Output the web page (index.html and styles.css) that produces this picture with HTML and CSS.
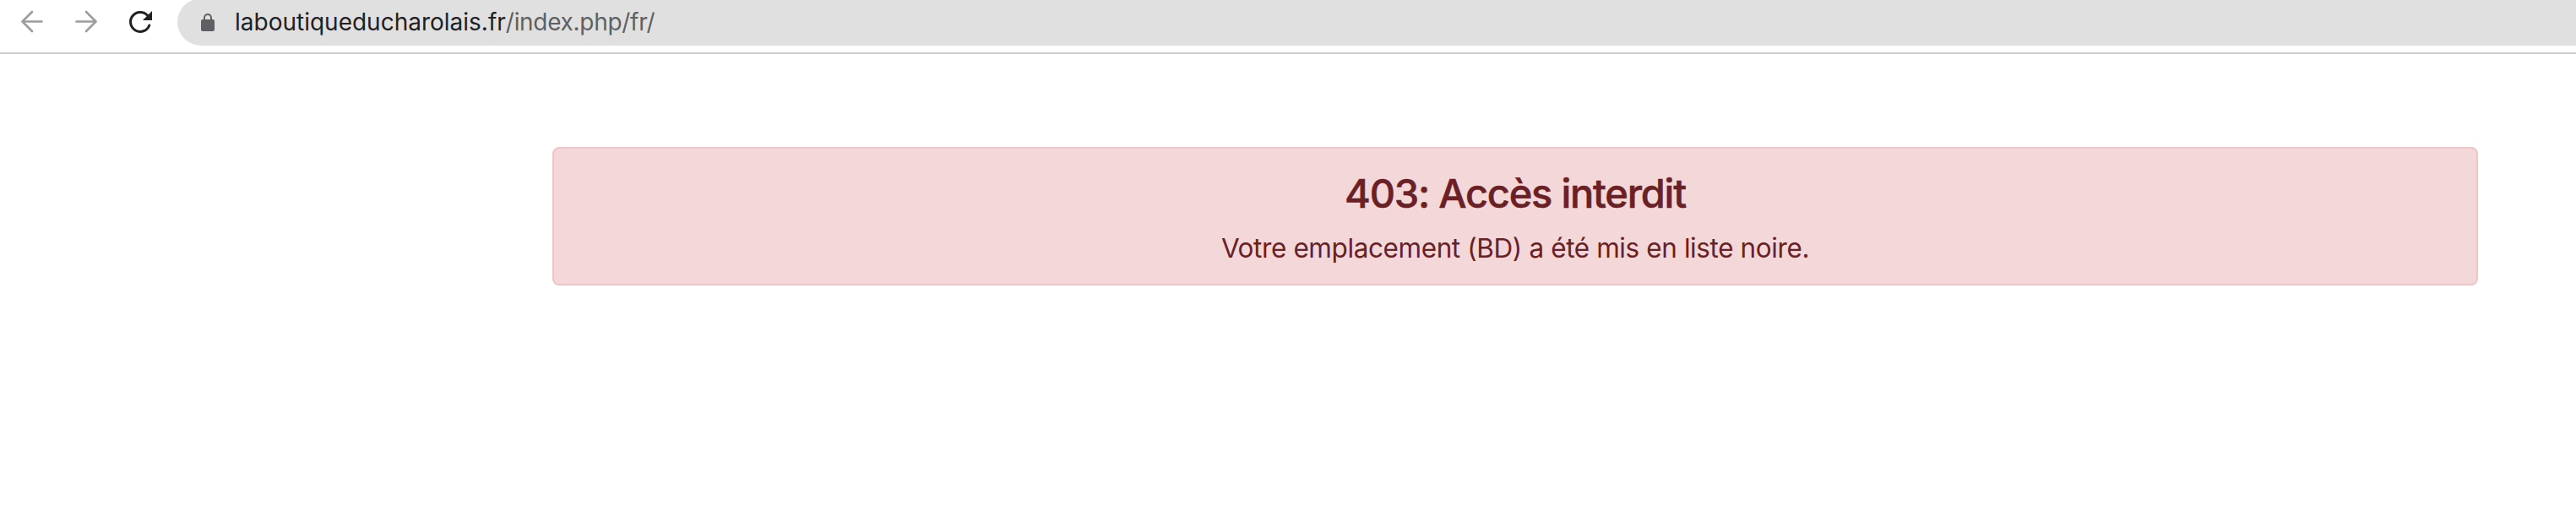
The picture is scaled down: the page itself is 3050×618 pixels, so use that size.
FILE: index.html
```html
<!DOCTYPE html>
<html lang="fr">
  <head>
    <meta charset="utf-8">
    <title>403: Accès interdit</title>
    <link rel="stylesheet" href="styles.css">
  </head>
  <body>
    <div class="toolbar">
      <svg class="icon" viewBox="0 0 32 32">
        <path d="M25.500 16.500H3M14 5L2.500 16.500L14 28" />
      </svg>
      <svg class="icon" viewBox="0 0 32 32">
        <path d="M2.500 16.500H25M14 5L25.500 16.500L14 28" />
      </svg>
      <svg class="icon reload" viewBox="0 0 32 32">
        <path d="M24.800 21A11.500 11.500 0 1 1 22.600 9.300" />
        <path class="head" d="M28 4V15H17Z" />
      </svg>
      <div class="address">
        <svg class="lock" viewBox="0 0 16 22">
          <rect x="0" y="8" width="16" height="14" rx="2" />
          <path d="M4 9V6A4 4 0 0 1 12 6V9" />
        </svg>
        <span class="url"><span class="domain">laboutiqueducharolais.fr</span><span class="path">/index.php/fr/</span></span>
      </div>
    </div>
    <div class="container">
      <div class="alert">
        <h1>403: Accès interdit</h1>
        <p>Votre emplacement (BD) a été mis en liste noire.</p>
      </div>
    </div>
  </body>
</html>
```

FILE: styles.css
```css
body {
  margin: 0;
  background-color: #fff;
  font-family: Inter, "Liberation Sans", sans-serif;
}

.toolbar {
  display: flex;
  box-sizing: border-box;
  height: 64px;
  padding-left: 24px;
  overflow: hidden;
  border-bottom: 2px solid #ccc;
}

.icon {
  flex: none;
  width: 32px;
  height: 32px;
  margin: 9px 32px 0 0;
  fill: none;
  stroke: #9d9d9d;
  stroke-width: 2.7;
  stroke-linecap: round;
  stroke-linejoin: round;
}

.reload {
  margin-right: 26px;
  stroke: #202124;
  stroke-width: 3;
}

.reload .head {
  fill: #202124;
  stroke: none;
}

.address {
  display: flex;
  flex: 1;
  align-items: center;
  height: 56px;
  margin-top: -2px;
  padding-left: 28px;
  border-radius: 28px 0 0 28px;
  background-color: #e0e0e0;
}

.lock {
  width: 16px;
  height: 22px;
  fill: #5f6063;
}

.lock path {
  fill: none;
  stroke: #5f6063;
  stroke-width: 2;
}

.url {
  margin-left: 24px;
  font-size: 28px;
  white-space: nowrap;
}

.domain {
  color: #202124;
}

.path {
  color: #5f6063;
  letter-spacing: -0.3px;
}

.container {
  width: 2280px;
  margin: 110px 0 0 654px;
}

.alert {
  box-sizing: border-box;
  height: 164px;
  padding: 24px 40px 0;
  border: 2px solid #f0c5c9;
  border-radius: 8px;
  background-color: #f3d7d9;
  color: #6a2024;
  text-align: center;
}

.alert h1 {
  margin: 0 0 12px;
  font-size: 47px;
  font-weight: 500;
  line-height: 58px;
  letter-spacing: -1.25px;
  -webkit-text-stroke: 0.5px #6a2024;
}

.alert p {
  margin: 0;
  font-size: 31.5px;
  line-height: 48px;
  letter-spacing: -0.4px;
}
```
